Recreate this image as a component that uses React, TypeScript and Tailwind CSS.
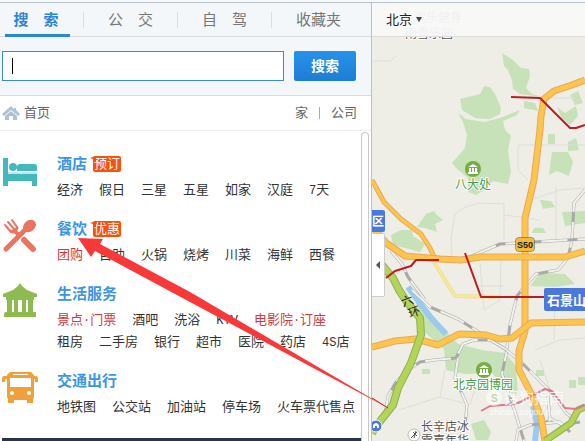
import React from 'react';

type Item = { label: string; hot?: boolean };
type Section = { title: string; badge?: string; icon: React.ReactNode; rows: Item[][] };

const plain = (...labels: string[]): Item[] => labels.map((label) => ({ label }));

const BedIcon = () => (
  <svg viewBox="0 0 36 36" className="h-9 w-9" fill="#45b8bd" aria-hidden="true">
    <path d="M1 6h5v15h29v13h-5v-5H6v5H1z" />
    <circle cx="11" cy="15" r="4" />
    <path d="M18 12h14q3 0 3 3v4H15v-4q0-3 3-3z" />
    <path d="M6 20h29v2H6z" fill="#c3e8ea" />
  </svg>
);

const CutleryIcon = () => (
  <svg viewBox="0 0 36 36" className="h-9 w-9" fill="none" stroke="#e9745f" strokeLinecap="round" aria-hidden="true">
    <path d="M4 32L24 12" strokeWidth="5" />
    <ellipse cx="27.500" cy="9" rx="7" ry="5.500" transform="rotate(-40 27.500 9)" fill="#e9745f" stroke="none" />
    <path d="M22 23l9 9" strokeWidth="6" />
    <path d="M3 8l6 7M6 5l7 8M10 3l5 7" strokeWidth="2" />
    <path d="M9 14q3 3 6-3" strokeWidth="3" />
    <path d="M12 14l4 3" strokeWidth="4" />
  </svg>
);

const TempleIcon = () => (
  <svg viewBox="0 0 36 36" className="h-9 w-9" fill="#8dbb50" aria-hidden="true">
    <path d="M18 1l2 3 5 4 10 4v3h-3v3H4v-3H1v-3l10-4 5-4z" />
    <path d="M5 17h5v14H5zM12 17h4v14h-4zM20 17h4v14h-4zM26 17h5v14h-5z" />
    <path d="M3 30h31v5H2v-3z" />
  </svg>
);

const BusIcon = () => (
  <svg viewBox="0 0 36 36" className="h-9 w-9" fill="#f0a03a" aria-hidden="true">
    <path d="M8 3h21l3 3v22l-1 2v4h-6v-3H12v3H6v-4l-1-2V6z" />
    <path d="M5 7H2Q0 7 0 10v3h3v-3h2zM32 7h2q2 0 2 3v3h-3v-3h-1z" />
    <path d="M11 5h15v1H11zM8 9h21v9H8z" fill="#fff" />
    <circle cx="10" cy="24" r="2" fill="#fff" />
    <circle cx="27" cy="24" r="2" fill="#fff" />
  </svg>
);

const sections: Section[] = [
  {
    title: '酒店',
    badge: '预订',
    icon: <BedIcon />,
    rows: [plain('经济', '假日', '三星', '五星', '如家', '汉庭', '7天')],
  },
  {
    title: '餐饮',
    badge: '优惠',
    icon: <CutleryIcon />,
    rows: [[{ label: '团购', hot: true }, ...plain('自助', '火锅', '烧烤', '川菜', '海鲜', '西餐')]],
  },
  {
    title: '生活服务',
    icon: <TempleIcon />,
    rows: [
      [{ label: '景点·门票', hot: true }, ...plain('酒吧', '洗浴', 'KTV'), { label: '电影院·订座', hot: true }],
      plain('租房', '二手房', '银行', '超市', '医院', '药店', '4S店'),
    ],
  },
  {
    title: '交通出行',
    icon: <BusIcon />,
    rows: [plain('地铁图', '公交站', '加油站', '停车场', '火车票代售点')],
  },
];

const tabs = ['公　交', '自　驾', '收藏夹'];

function Label({ text }: { text: string }) {
  return (
    <>
      {text.split(/([·0-9A-Z]+)/).map((part, i) =>
        i % 2 ? (
          <span key={i} className="font-['Liberation_Mono',monospace] text-xs leading-none">
            {part}
          </span>
        ) : (
          part
        ),
      )}
    </>
  );
}

function Category({ section }: { section: Section }) {
  return (
    <section className="mb-[13px] flex">
      <div className="w-[57px] shrink-0 pl-[2px] pt-[3px]">{section.icon}</div>
      <div className="min-w-0">
        <h2 className="flex h-[30px] items-center text-[15px] font-bold leading-[30px] text-[#3b95e6]">
          <a href="#category">{section.title}</a>
          {section.badge && (
            <span className="relative ml-[6px] rounded-[2px] bg-[#f8510c] px-[1px] text-[13px] font-normal leading-4 text-white">
              <svg viewBox="0 0 6 6" className="absolute -left-[3px] top-0 h-[6px] w-[6px]" aria-hidden="true">
                <path d="M0 2L6 0v6H3V3z" fill="#f8510c" />
              </svg>
              {section.badge}
            </span>
          )}
        </h2>
        {section.rows.map((row, i) => (
          <ul key={i} className="flex h-[22px] gap-4 whitespace-nowrap text-[13px] leading-[22px]">
            {row.map((item) => (
              <li key={item.label} className={item.hot ? 'text-[#d0393e]' : 'text-[#333]'}>
                <a href="#item">
                  <Label text={item.label} />
                </a>
              </li>
            ))}
          </ul>
        ))}
      </div>
    </section>
  );
}

function Sidebar() {
  return (
    <aside className="flex w-[372px] shrink-0 flex-col border-r border-[#b7c1c9] bg-white">
      <nav className="flex h-[34px] items-center border-b border-[#d5dade] bg-[#f3f7f9] pr-[6px] text-[15px] text-[#777]">
        <button className="ml-[5px] mr-[13px] h-[34px] w-[65px] shrink-0 border-b-[3px] border-[#2c86d8] pr-[3px] text-center font-bold leading-[34px] text-[#2c86d8]">
          搜　索
        </button>
        {tabs.map((tab) => (
          <button key={tab} className="h-4 flex-1 border-l border-[#d9dee2] text-center leading-4">
            {tab}
          </button>
        ))}
      </nav>
      <form className="flex h-[59px] items-center gap-[10px] border-b border-[#d8dcdf] bg-[#f3f7f9] pl-[2px] pr-[15px]">
        <div className="relative flex min-w-0 flex-1">
          <input aria-label="搜索" className="h-[30px] w-full border border-[#3b8ad2] bg-white px-[10px] text-sm outline-none" />
          <span className="absolute left-[10px] top-[7px] h-4 w-px bg-black" />
        </div>
        <button
          type="button"
          className="h-[30px] w-[62px] rounded-[2px] bg-linear-to-b from-[#2792ea] to-[#1d7dd4] text-sm font-bold text-white"
        >
          搜索
        </button>
      </form>
      <div className="flex h-[35px] items-center border-b border-[#eee] pl-[2px] pr-[14px] text-[13px] text-[#666]">
        <a href="#home" className="flex items-center gap-1">
          <svg viewBox="0 0 18 16" className="h-4 w-[18px]" aria-hidden="true">
            <path d="M9 1L0 9l2 2 7-6 7 6 2-2-4-4V3h-2v1z" fill="#b0c2d2" />
            <path d="M3 11l6-5 6 5v4h-4v-4H7v4H3z" fill="#b0c2d2" />
          </svg>
          首页
        </a>
        <a href="#h" className="ml-auto">
          家
        </a>
        <span className="mx-[11px] h-3 w-px bg-[#aaa]" />
        <a href="#office">公司</a>
      </div>
      <div className="flex flex-1">
        <div className="flex flex-1 flex-col pt-[18px]">
          {sections.map((s) => (
            <Category key={s.title} section={s} />
          ))}
          <div className="ml-[2px] mt-auto h-[3px] bg-[#26354b]" />
        </div>
        <div className="mr-[2px] mt-px w-2 rounded-t-full border-x border-t border-[#c8c8c8]" />
      </div>
    </aside>
  );
}

function Road({ d, w = 5, fill = '#fdc54b', edge = '#e8a75c' }: { d: string; w?: number; fill?: string; edge?: string }) {
  return (
    <>
      <path d={d} stroke={edge} strokeWidth={w + 2} />
      <path d={d} stroke={fill} strokeWidth={w} />
    </>
  );
}

const rails = [
  'M391 251L402 264L408 277L425 300',
  'M585 190L574 203L572 240L568 258L558 270L536 274L526 285L517 296L510 325L506 355L502 374L516 415L524 441',
  'M472 256L500 244L585 239',
  'M412 290L430 307L458 319L474 329L505 349L520 361L552 393L566 413L575 420',
  'M385 415L388 396L396 382L408 370L420 362L434 360L456 358L463 344L474 340L490 340L507 350',
  'M458 358L455 378L467 405L465 425L460 437',
  'M516 441L518 430L530 425L560 422L570 432M548 396L550 420L543 424M550 418L562 425L580 422',
];

function CityMap() {
  return (
    <svg className="absolute inset-0 h-full w-full" fill="none" strokeLinejoin="round" strokeLinecap="butt" role="img" aria-label="北京地图">
      <g transform="translate(-372 -3)">
        <g fill="#c7e1b8">
          <path d="M502 53L513 60L521 68L529 69L530 76L526 88L532 94L543 97L520 94L513 89L512 80L508 70L504 66z" />
          <path d="M484 86L490 87L495 94L501 108L500 114L490 119L475 118L462 110L460 99L480 94z" />
          <path d="M458 113L466 119L484 122L500 118L520 110L517 115L503 121L505 130L511 136L508 150L511 172L508 184L493 181L484 190L476 195L468 192L468 178L456 168L452 163L465 148L467 135L463 122z" />
          <path d="M524 101L535 103L538 111L524 108zM557 107L565 113L576 106L578 116L570 125L561 117zM548 134h7v10h-7zM568 142l8-4 3 12-11 1z" />
          <path d="M552 152l16 0 5 10-4 14-12-5-8 4zM540 200l11 1 4 6-12 2zM534 228l9 0 3 5-14 0zM562 212l23-1v12l-20 3z" />
          <path d="M426 214l8-3 3 4 6 5-8 4 2 8-12-4-8-1zM391 235l10-5 11 0 1 6 12 8-5 8-11-3-16-4z" />
          <path d="M416 303L428 309L444 329L458 344L482 350L505 353L516 366L518 397L505 390L492 373L465 374L446 370L444 349L423 331z" />
          <path d="M540 273l25 1 10 10-20 3-25-1zM471 424l13-4 7 12-3 8-12 0zM422 369h8v5h-8zM536 370h8v6h-8zM569 380h7v8h-7zM578 377h7v8h-7zM570 95l8-4 5 12-8 2z" />
        </g>
        <path d="M408 287L419 302L431 318L446 334" stroke="#9acbed" strokeWidth="6" />
        <path d="M533 406L537 424L535 441" stroke="#9acbed" strokeWidth="6" />
        <g stroke="#dededa">
          <path d="M372 61L390 61L396 56M452 256L451 238L455 214L465 207L480 203L504 204L504 240M504 215L540 220M518 145L585 145M518 145V170L528 180M556 187V240M540 98L575 98" />
          <path d="M480 263L484 310L500 300L501 260M530 200L560 190L585 188M535 350L560 340L585 338M399 410L440 397L445 370M440 397L464 403M540 360L550 390M470 405L476 385M555 300L554 340M478 286H504" />
        </g>
        {rails.map((d) => (
          <g key={d}>
            <path d={d} stroke="#a9a9a9" strokeWidth="3" />
            <path d={d} stroke="#f3f3ee" strokeWidth="2" strokeDasharray="26 10" />
          </g>
        ))}
        <Road d="M434 262L455 296L500 297" w={2} fill="#fbe997" edge="#ecdf9c" />
        <Road d="M585 80L572 85L554 91L544 99L541 116L540 130L534 180L525 218L525 331L519 351L519 370L532 395L541 417L545 441" w={5} />
        <Road d="M372 180L384 202L401 219L421 234L430 248L436 261" w={3} />
        <Road d="M372 226L386 243L405 256L440 259L461 260L480 257L565 257L585 251" w={5} />
        <Road d="M372 347L395 341L416 339L438 345L459 334L486 335L500 339L512 338L531 323L585 322" w={5} />
        <Road d="M382 265L393 278L399 290L407 302L420 318L421 335L411 363L398 388L393 405L381 420L372 433" w={6} fill="#b4d455" edge="#8eae5c" />
        <Road d="M545 441L558 432L571 423L578 410L585 407" w={5} fill="#b4d455" edge="#8eae5c" />
        <g stroke="#bd1b21" strokeWidth="2">
          <path d="M511 97L540 98L570 128H576L585 125" />
          <path d="M386 278L395 271L411 266L416 260H439M465 253L481 297H545" />
          <path d="M372 398L388 408" strokeWidth="1" />
        </g>
        <path d="M481 411L490 406L516 404L545 389L552 391L565 408L576 409L585 405" stroke="#d97a90" strokeWidth="2" />
        {[[473, 169], [484, 370]].map(([x, y]) => (
          <g key={y} transform={`translate(${x} ${y})`}>
            <circle r="8" fill="#76ad43" />
            <path d="M-5 -2L0 -5L5 -2zM-4 -1h2v4h-2zM-1 -1h2v4h-2zM2 -1h2v4h-2zM-5 3H5v2H-5z" fill="#fff" />
          </g>
        ))}
        <g className="font-['Liberation_Sans','Noto_Sans_CJK_SC',sans-serif]" strokeLinejoin="round" paintOrder="stroke">
          <g fill="#4c9a43" stroke="#fff" strokeWidth="2" fontSize="12">
            <text x="455" y="189">八大处</text>
            <text x="453" y="389">北京园博园</text>
          </g>
          <g fill="#555" stroke="#fff" strokeWidth="2" fontSize="12">
            <text x="421" y="431">长辛店冰</text>
            <text x="421" y="445">雪嘉年华</text>
            <text x="414" y="22">欢乐健身</text>
            <text x="405" y="38">雨雪乐园</text>
          </g>
          <g fill="#222" fontSize="12">
            <text transform="translate(403 307) rotate(-20)">六</text>
            <text transform="translate(410 318) rotate(-20)">环</text>
          </g>
          <rect x="516" y="238" width="18" height="13" rx="2" fill="#f2b93c" stroke="#4b422b" />
          <text x="517" y="248" fill="#222" fontSize="9" fontWeight="bold">S50</text>
          <rect x="360" y="210" width="25" height="22" rx="2" fill="#4b78dc" />
          <text x="372" y="226" fill="#fff" fontSize="12" fontWeight="bold">区</text>
          <rect x="544" y="288" width="60" height="23" rx="2" fill="#4b78dc" />
          <text x="547" y="305" fill="#fff" fontSize="13" fontWeight="bold">石景山</text>
          <g fill="#fff" opacity="0.800">
            <circle cx="494" cy="398" r="8" opacity="0.700" />
            <text x="491" y="402" fontSize="10" fontWeight="bold" fill="#b9cfab">S</text>
            <text x="504" y="403" fontSize="15">搜狗指南</text>
            <text x="490" y="415" fontSize="9">zhinan.sogou.com</text>
          </g>
        </g>
        <circle cx="376" cy="426" r="6" fill="#4b78dc" stroke="#fff" />
        <path d="M373 428v-3q3-4 6 0v3h-2v-2h-2v2z" fill="#fff" />
        <circle cx="414" cy="435" r="6" fill="#fff" stroke="#bbb" />
        <path d="M411 438l6-6m-4 0l4 4m-1-5l-2 7" stroke="#555" />
      </g>
    </svg>
  );
}

export default function App() {
  return (
    <div className="relative flex min-h-screen flex-col overflow-hidden bg-[#f8f9fa] pt-[2px] font-['Liberation_Sans','Noto_Sans_CJK_SC',sans-serif]">
      <div className="flex flex-1 border-t border-[#b7c1c9]">
        <Sidebar />
        <main className="relative min-w-0 flex-1 overflow-hidden bg-[#eeeee7]">
          <CityMap />
          <header className="relative flex h-[34px] items-center border-b border-[#dcdcdc] bg-[#f8f8f8]/95 pl-[14px]">
            <button className="flex items-center gap-1 text-[13px] text-[#222]">
              北京
              <svg viewBox="0 0 6 5" className="h-[5px] w-[6px]" aria-hidden="true">
                <path d="M0 0h6L3 5z" fill="#444" />
              </svg>
            </button>
          </header>
          <button
            aria-label="收起"
            className="absolute left-0 top-[230px] flex h-16 w-[13px] items-center justify-center rounded-r-[2px] border border-l-0 border-[#ccc] bg-white"
          >
            <svg viewBox="0 0 4 8" className="h-2 w-1" aria-hidden="true">
              <path d="M4 0v8L0 4z" fill="#555" />
            </svg>
          </button>
        </main>
      </div>
      <svg viewBox="0 0 310 171" className="pointer-events-none absolute left-[78px] top-[238px] h-[171px] w-[310px]" aria-hidden="true">
        <path d="M0 0L25 1L22 6L112 54L310 170L112 64L17 13L13 19z" fill="#f9383a" />
      </svg>
    </div>
  );
}
